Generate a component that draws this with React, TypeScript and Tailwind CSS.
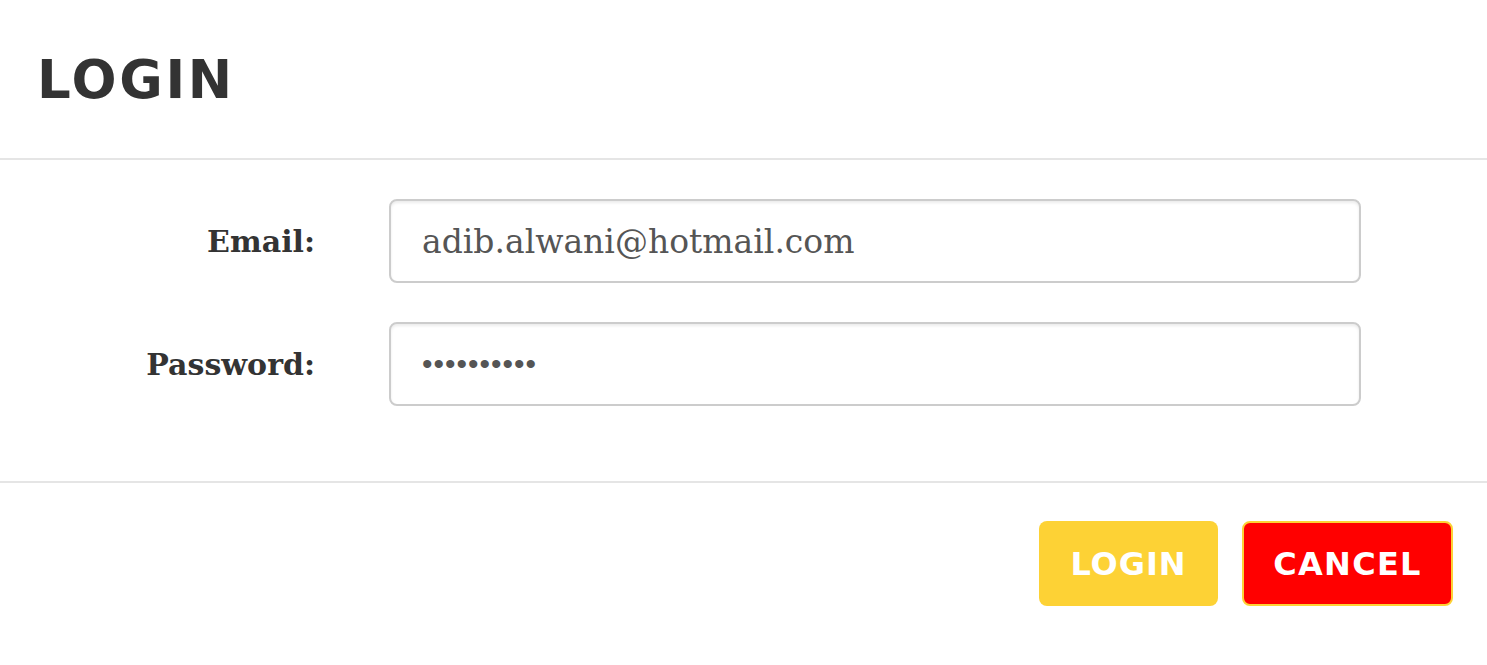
import { useState } from "react"

const LoginModal = () => {
    const [email, setEmail] = useState("adib.alwani@hotmail.com")
    const [password, setPassword] = useState("1234567890")

    const heading = { fontFamily: "'DejaVu Sans', 'Open Sans', sans-serif" }
    const slab = { fontFamily: "'DejaVu Serif', 'Liberation Serif', serif" }

    return (
        <div className="w-[1487px] h-[665px] bg-white">
            <div className="h-[641px] bg-white rounded-[3px] flex flex-col">
                <div className="h-[160px] px-[37px] flex items-center border-b-2 border-[#e5e5e5]">
                    <h1 className="text-[53px] font-bold text-[#333333] tracking-[0.05em] pt-[2px]" style={heading}>
                        LOGIN
                    </h1>
                </div>

                <form className="h-[323px] pt-[39px] border-b-2 border-[#e5e5e5] flex flex-col gap-[39px]" onSubmit={(e) => e.preventDefault()}>
                    <div className="flex items-center">
                        <label className="w-[315px] text-right text-[30px] font-bold text-[#333333]" style={slab}>
                            Email:
                        </label>
                        <input
                            className="ml-[74px] w-[972px] h-[84px] rounded-[8px] border-2 border-[#cccccc] shadow-[inset_0_2px_3px_rgba(0,0,0,0.08)] px-[31px] text-[33px] text-[#555555] focus:outline-none"
                            style={slab}
                            type="email"
                            value={email}
                            onChange={(e) => setEmail(e.target.value)}
                        />
                    </div>
                    <div className="flex items-center">
                        <label className="w-[315px] text-right text-[30px] font-bold text-[#333333]" style={slab}>
                            Password:
                        </label>
                        <input
                            className="ml-[74px] w-[972px] h-[84px] rounded-[8px] border-2 border-[#cccccc] shadow-[inset_0_2px_3px_rgba(0,0,0,0.08)] px-[31px] text-[30px] tracking-[1px] text-[#555555] focus:outline-none"
                            style={{ fontFamily: "'Liberation Sans', Arial, sans-serif" }}
                            type="password"
                            value={password}
                            onChange={(e) => setPassword(e.target.value)}
                        />
                    </div>
                </form>

                <div className="flex justify-end items-start gap-[24px] pt-[38px] pr-[34px]">
                    <button
                        className="w-[179px] h-[85px] rounded-[8px] bg-[#fdd235] text-white text-[32px] font-bold tracking-[0.03em]"
                        style={heading}
                    >
                        LOGIN
                    </button>
                    <button
                        className="w-[211px] h-[85px] rounded-[8px] bg-[#ff0000] border-2 border-[#fdd235] text-white text-[32px] font-bold tracking-[0.04em]"
                        style={heading}
                    >
                        CANCEL
                    </button>
                </div>
            </div>
        </div>
    )
}

export default LoginModal
